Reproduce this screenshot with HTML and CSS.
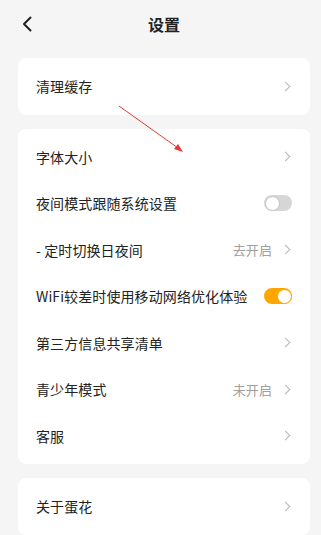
FILE: index.html
```html
<!DOCTYPE html>
<html lang="zh-CN">
<head>
    <meta charset="UTF-8">
    <meta name="viewport" content="width=device-width, initial-scale=1.0">
    <title>设置</title>
    <link rel="stylesheet" href="styles.css">
</head>
<body>
    <div class="page">
        <div class="header">
            <svg class="back" width="10" height="16" viewBox="0 0 10 16">
                <path d="M8.5 1.5 L2 8 L8.5 14.5" fill="none" stroke="#222" stroke-width="2" stroke-linecap="round" stroke-linejoin="round"/>
            </svg>
            <h1>设置</h1>
        </div>

        <div class="card">
            <div class="row">
                <span class="label">清理缓存</span>
                <span class="chev"></span>
            </div>
        </div>

        <div class="card">
            <div class="row">
                <span class="label">字体大小</span>
                <span class="chev"></span>
            </div>
            <div class="row">
                <span class="label">夜间模式跟随系统设置</span>
                <span class="switch"></span>
            </div>
            <div class="row">
                <span class="label">- 定时切换日夜间</span>
                <span class="value">去开启</span>
                <span class="chev"></span>
            </div>
            <div class="row">
                <span class="label">WiFi较差时使用移动网络优化体验</span>
                <span class="switch on"></span>
            </div>
            <div class="row">
                <span class="label">第三方信息共享清单</span>
                <span class="chev"></span>
            </div>
            <div class="row">
                <span class="label">青少年模式</span>
                <span class="value">未开启</span>
                <span class="chev"></span>
            </div>
            <div class="row">
                <span class="label">客服</span>
                <span class="chev"></span>
            </div>
        </div>

        <div class="card">
            <div class="row">
                <span class="label">关于蛋花</span>
                <span class="chev"></span>
            </div>
        </div>

        <!-- annotation arrow drawn over the page -->
        <svg class="pointer" width="80" height="60" viewBox="0 0 80 60">
            <line x1="1" y1="1" x2="60" y2="43" stroke="#e53935" stroke-width="1"/>
            <polygon points="65,47 56,44 60,39" fill="#e53935"/>
        </svg>
    </div>
</body>
</html>
```

FILE: styles.css
```css
body {
    margin: 0;
    background-color: #f5f5f5;
    font-family: "Noto Sans CJK SC", "Noto Sans", sans-serif;
    color: #222;
}
.page {
    position: relative;
    height: 535px;
    overflow: hidden;
    padding: 0 11px 0 18px;
}
.header {
    position: relative;
    height: 48px;
    display: flex;
    align-items: center;
    justify-content: center;
    margin-bottom: 10px;
}
.header .back {
    position: absolute;
    left: 4px;
    top: 16px;
}
.header h1 {
    margin: 0;
    font-size: 16px;
    font-weight: 600;
}
.card {
    background-color: white;
    border-radius: 8px;
    padding: 5px 0;
    margin-bottom: 14px;
}
.row {
    height: 46.5px;
    display: flex;
    align-items: center;
    padding: 0 19px 0 18px;
    font-size: 14px;
    letter-spacing: 0.1px;
}
.card:first-of-type .row {
    height: 46px;
}
.label {
    flex: 1;
    white-space: nowrap;
}
.value {
    font-size: 13px;
    color: #a0a0a0;
    margin-right: 10px;
}
.chev {
    width: 6px;
    height: 6px;
    border-top: 1px solid #b5b5b5;
    border-right: 1px solid #b5b5b5;
    transform: rotate(45deg);
    margin-right: 2px;
}
.switch {
    position: relative;
    width: 28px;
    height: 16px;
    border-radius: 8px;
    background-color: #d6d6d6;
    margin-right: -1px;
}
.switch::after {
    content: "";
    position: absolute;
    left: 1px;
    top: 1px;
    width: 13px;
    height: 13px;
    border: 0.5px solid #c4c4c4;
    border-radius: 50%;
    background-color: white;
}
.switch.on {
    background-color: #ffa500;
}
.switch.on::after {
    left: 13px;
    border-color: #ffa500;
}
.pointer {
    position: absolute;
    left: 118px;
    top: 105px;
}
```
